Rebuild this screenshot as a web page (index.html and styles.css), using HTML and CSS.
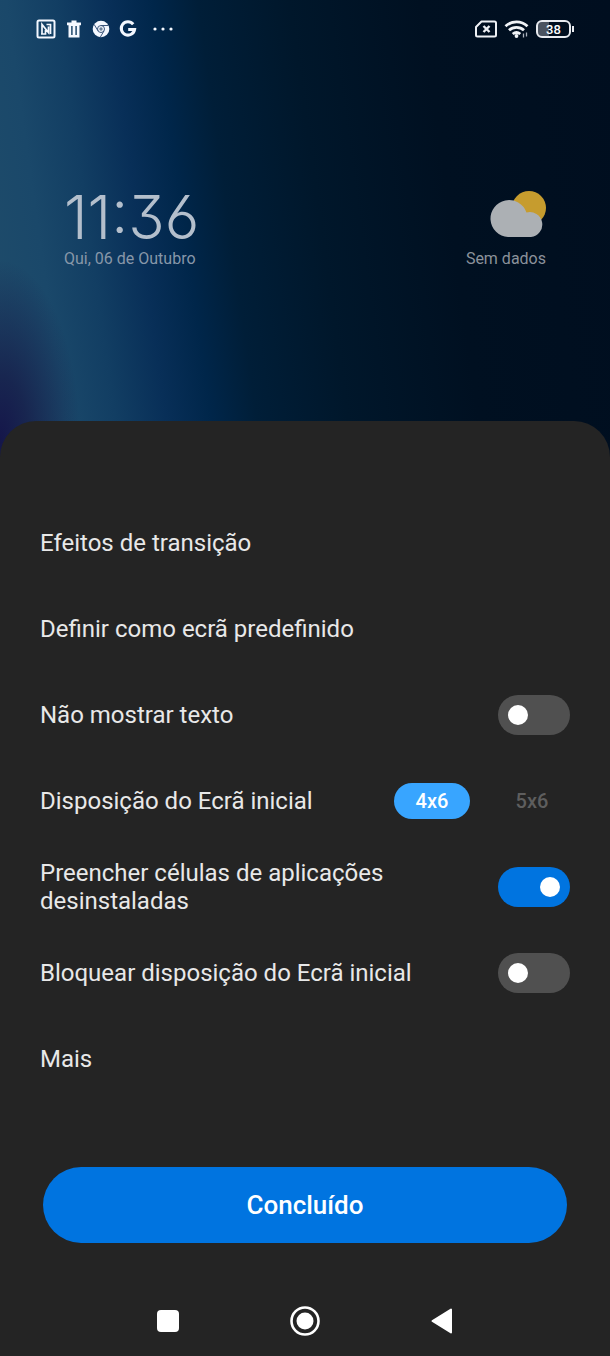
FILE: index.html
```
<!DOCTYPE html>
<html lang="pt">
<head>
<meta charset="utf-8">
<meta name="viewport" content="width=device-width, initial-scale=1">
<title>Ecrã inicial</title>
<link rel="stylesheet" href="styles.css">
</head>
<body>
<div class="phone">
  <header class="status">
    <div class="status-group notifications">
      <svg width="20" height="20" viewBox="0 0 20 20" fill="none" stroke="#f4f8ff" stroke-width="2" role="img" aria-label="NFC"><rect x="1.500" y="1.500" width="17" height="17" rx="1.500"/><path d="M6 15V5.500l6.500 8V7.500M10.500 5.500H14.500V15M5 15h4.500V11" stroke-width="1.700"/></svg>
      <svg width="18" height="20" viewBox="0 0 18 20" fill="#f4f8ff" role="img" aria-label="Lixo"><path fill-rule="evenodd" d="M2 3.500h4.500V1.500h5v2H16v2.700h-1.500V18.500h-11V6.200H2zM6.200 7v9h1.400V7zM10.400 7v9h1.400V7z"/></svg>
      <svg width="18" height="18" viewBox="0 0 18 18" role="img" aria-label="Chrome"><circle cx="9" cy="9" r="8.300" fill="#f4f8ff"/><g fill="none" stroke="#3a557a" stroke-width="1"><circle cx="9" cy="9" r="3.500"/><path d="M9 5.500h7.500M6 10.800 2.200 4.500M12 10.800 8.300 17.200"/></g><circle cx="9" cy="9" r="1.700" fill="#6d8199"/></svg>
      <svg width="18" height="18" viewBox="0 0 18 18" fill="none" stroke="#f4f8ff" stroke-width="3" role="img" aria-label="Google"><path d="M14.200 4.200A6.700 6.700 0 1 0 15.600 9.400H9.200"/></svg>
      <svg class="dots" width="22" height="18" viewBox="0 0 22 18" fill="#f4f8ff" role="img" aria-label="Mais notificações"><circle cx="3" cy="9" r="1.600"/><circle cx="11" cy="9" r="1.600"/><circle cx="19" cy="9" r="1.600"/></svg>
    </div>
    <div class="status-group">
      <svg width="24" height="20" viewBox="0 0 24 20" fill="none" stroke="#eef1f5" stroke-width="2" role="img" aria-label="Sem SIM"><path d="M7.500 2.500H20.500a1.500 1.500 0 0 1 1.500 1.500V16a1.500 1.500 0 0 1-1.500 1.500H3.500A1.500 1.500 0 0 1 2 16V8z" stroke-linejoin="round"/><path d="m9.500 7 6 6m0-6-6 6" stroke-width="2.400"/></svg>
      <svg width="26" height="20" viewBox="0 0 26 20" fill="none" stroke="#f0f3f7" stroke-width="2.800" role="img" aria-label="Wi-Fi"><path d="M1.500 7.200a16 16 0 0 1 22 0M5 11.300a11 11 0 0 1 15 0M8.700 15a6 6 0 0 1 7.600 0"/><circle cx="12.500" cy="17" r="1.900" fill="#f0f3f7" stroke="none"/><path d="M19.500 14.500v4M22.500 13.500v4" stroke-width="1.300" stroke="#aab2bd"/></svg>
      <div class="battery"><span class="battery-body">38</span><span class="battery-tip"></span></div>
    </div>
  </header>

  <section class="widget">
    <div class="clock">
      <time class="clock-time">11:36</time>
      <span class="widget-text">Qui, 06 de Outubro</span>
    </div>
    <div class="weather">
      <svg width="58" height="48" viewBox="0 0 58 48" role="img" aria-label="Parcialmente nublado"><circle cx="41" cy="18" r="17" fill="#c69c2e"/><path d="M20 47a18.500 18.500 0 1 1 18.500-24.500A12.500 12.500 0 1 1 43 47z" fill="#acb0b4"/></svg>
      <span class="widget-text">Sem dados</span>
    </div>
  </section>

  <main class="sheet">
    <div class="options">
      <button class="row" type="button">Efeitos de transição</button>
      <button class="row" type="button">Definir como ecrã predefinido</button>
      <label class="row"><span class="row-label">Não mostrar texto</span><input class="switch" type="checkbox" role="switch"></label>
      <div class="row">
        <span class="row-label" id="grid-label">Disposição do Ecrã inicial</span>
        <div class="grid-choice" role="group" aria-labelledby="grid-label">
          <button class="pill pill-on" type="button" aria-pressed="true">4x6</button>
          <button class="pill" type="button" aria-pressed="false">5x6</button>
        </div>
      </div>
      <label class="row"><span class="row-label">Preencher células de aplicações desinstaladas</span><input class="switch" type="checkbox" role="switch" checked></label>
      <label class="row"><span class="row-label">Bloquear disposição do Ecrã inicial</span><input class="switch" type="checkbox" role="switch"></label>
      <button class="row" type="button">Mais</button>
    </div>
    <button class="done" type="button">Concluído</button>
    <nav class="navbar" aria-label="Sistema">
      <button class="nav-key" type="button" aria-label="Recentes"><svg width="32" height="32" viewBox="0 0 32 32"><rect x="5" y="5" width="22" height="22" rx="4" fill="#fff"/></svg></button>
      <button class="nav-key" type="button" aria-label="Início"><svg width="32" height="32" viewBox="0 0 32 32"><circle cx="16" cy="16" r="13.500" fill="none" stroke="#fff" stroke-width="2.600"/><circle cx="16" cy="16" r="8.500" fill="#fff"/></svg></button>
      <button class="nav-key" type="button" aria-label="Voltar"><svg width="32" height="32" viewBox="0 0 32 32"><path d="M6.500 16 25 4.500v23z" fill="#fff" stroke="#fff" stroke-width="2" stroke-linejoin="round"/></svg></button>
    </nav>
  </main>
</div>
</body>
</html>
```
FILE: styles.css
```
* {
  box-sizing: border-box;
}

body {
  margin: 0;
  background: #242424;
  font-family: Roboto, "Liberation Sans", sans-serif;
  color: #e8e8e8;
}

button {
  padding: 0;
  border: 0;
  background: none;
  color: inherit;
  font: inherit;
  cursor: pointer;
}

svg {
  display: block;
}

.phone {
  display: flex;
  flex-direction: column;
  min-height: 100vh;
  background:
    radial-gradient(ellipse 80px 180px at 0 440px, #15164a 0, #17204cdd 35%, #1b355800 100%),
    linear-gradient(82deg, #1f4c6a 0, #1a486a 70px, #123e63 120px, #082f58 170px, #00264a 215px, #001e38 260px, #00172b 350px, #001021 480px, #000e1f 100%);
  background-size: 100% 460px;
  background-repeat: no-repeat;
}

.status {
  display: flex;
  justify-content: space-between;
  align-items: center;
  height: 58px;
  padding: 0 36px;
}

.status-group {
  display: flex;
  align-items: center;
  gap: 6px;
}

.notifications {
  gap: 9px;
}

.dots {
  margin-left: 6px;
}

.battery {
  display: flex;
  align-items: center;
  gap: 1px;
}

.battery-body {
  width: 35px;
  height: 18px;
  border: 2px solid #e8ebf0;
  border-radius: 6px;
  background: linear-gradient(90deg, #4a5360 11px, transparent 11px);
  color: #fff;
  font-size: 13px;
  font-weight: 500;
  line-height: 15px;
  text-align: center;
}

.battery-tip {
  width: 2px;
  height: 6px;
  background: #e8ebf0;
}

.widget {
  display: flex;
  justify-content: space-between;
  align-items: flex-end;
  height: 212px;
  padding: 0 64px;
}

.clock,
.weather {
  display: flex;
  flex-direction: column;
}

.clock-time {
  color: #b4bfcc;
  font-family: Inter, Roboto, sans-serif;
  font-size: 60px;
  font-weight: 300;
  font-feature-settings: "cv09", "cv03";
  line-height: 62px;
}

.widget-text {
  color: #8797a9;
  font-size: 16px;
  line-height: 22px;
}

.weather {
  align-items: flex-end;
  gap: 10px;
}

.weather .widget-text {
  color: #8b929b;
}

.sheet {
  display: flex;
  flex: 1;
  flex-direction: column;
  margin-top: 151px;
  padding-top: 79px;
  border-radius: 36px 36px 0 0;
  background: #242424;
}

.options {
  display: flex;
  flex-direction: column;
}

.row {
  display: flex;
  justify-content: space-between;
  align-items: center;
  min-height: 86px;
  padding: 0 40px;
  font-size: 24px;
  line-height: 28px;
  text-align: left;
}

.row-label {
  max-width: 380px;
}

.switch {
  flex: none;
  width: 72px;
  height: 40px;
  margin: 0;
  padding: 10px;
  border-radius: 20px;
  background: #505050;
  appearance: none;
  cursor: pointer;
}

.switch::before {
  display: block;
  width: 20px;
  height: 20px;
  border-radius: 50%;
  background: #fff;
  content: "";
}

.switch:checked {
  background: #0074e0;
}

.switch:checked::before {
  margin-left: auto;
}

.grid-choice {
  display: flex;
  gap: 24px;
}

.pill {
  width: 76px;
  height: 36px;
  border-radius: 18px;
  color: #5e5e5e;
  font-size: 20px;
  font-weight: 500;
}

.pill-on {
  background: #38a5ff;
  color: #fff;
}

.done {
  height: 76px;
  margin: 65px 43px 0;
  border-radius: 38px;
  background: #0074e0;
  color: #fff;
  font-size: 26px;
  font-weight: 500;
}

.navbar {
  display: flex;
  justify-content: center;
  align-items: center;
  gap: 105px;
  height: 70px;
  margin-top: auto;
}

.nav-key {
  width: 32px;
  height: 32px;
}
```
